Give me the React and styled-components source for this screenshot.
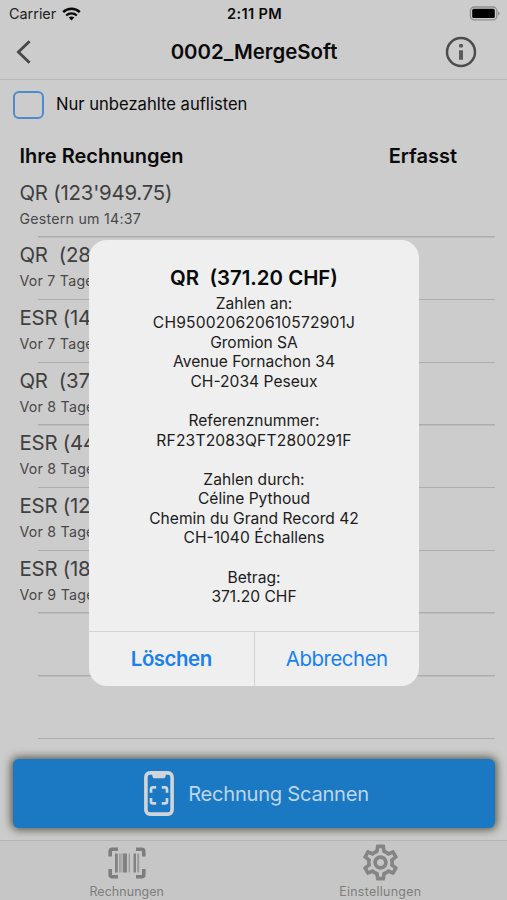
import React from "react";
import styled, { createGlobalStyle } from "styled-components";
import { MdOutlineSettings } from "react-icons/md";

const bills = [
  { title: "QR (123'949.75)", date: "Gestern um 14:37" },
  { title: "QR  (28", date: "Vor 7 Tage" },
  { title: "ESR (14", date: "Vor 7 Tage" },
  { title: "QR  (37", date: "Vor 8 Tage" },
  { title: "ESR (44", date: "Vor 8 Tage" },
  { title: "ESR (12", date: "Vor 8 Tage" },
  { title: "ESR (18", date: "Vor 9 Tage" },
  {},
  {},
];

const message = [
  { text: "Zahlen an:" },
  { text: "CH950020620610572901J", code: true },
  { text: "Gromion SA" },
  { text: "Avenue Fornachon 34" },
  { text: "CH-2034 Peseux" },
  { text: "" },
  { text: "Referenznummer:" },
  { text: "RF23T2083QFT2800291F", code: true },
  { text: "" },
  { text: "Zahlen durch:" },
  { text: "Céline Pythoud" },
  { text: "Chemin du Grand Record 42" },
  { text: "CH-1040 Échallens" },
  { text: "" },
  { text: "Betrag:" },
  { text: "371.20 CHF" },
];

function WifiIcon() {
  return (
    <svg width="19" height="14" viewBox="0 0 19 14" fill="none" stroke="#0a0a0a">
      <path d="M1.2 5.2C5.9 .7 13.1 .7 17.8 5.2" strokeWidth="2.5" />
      <path d="M4.2 8.5C7.2 5.7 11.8 5.7 14.8 8.5" strokeWidth="2.3" />
      <path d="M9.5 13.4L6.7 10.6Q9.5 8.4 12.3 10.6Z" fill="#0a0a0a" stroke="none" />
    </svg>
  );
}

function BatteryIcon() {
  return (
    <svg width="31" height="15" viewBox="0 0 31 15">
      <rect x="1.4" y="1" width="26.4" height="12.8" rx="3.8" fill="none" stroke="#8e8e8e" strokeWidth="1.3" />
      <rect x="3.2" y="2.8" width="22.6" height="9.2" rx="1.6" fill="#000" />
      <path d="M29 5.2Q30.6 6 30.6 7.4T29 9.6Z" fill="#8e8e8e" />
    </svg>
  );
}

function BackIcon() {
  return (
    <svg width="16" height="26" viewBox="0 0 16 26">
      <path d="M13.6 2.2L2.4 13L13.6 23.8" fill="none" stroke="#484848" strokeWidth="2.8" />
    </svg>
  );
}

function InfoIcon() {
  return (
    <svg width="32" height="32" viewBox="0 0 32 32">
      <circle cx="16" cy="16" r="14" fill="none" stroke="#4c4c4c" strokeWidth="2.5" />
      <rect x="14" y="8" width="4" height="3.4" rx="1" fill="#5c5c5c" />
      <rect x="14" y="14.2" width="4" height="9.6" rx=".6" fill="#5c5c5c" />
    </svg>
  );
}

function PhoneScanIcon() {
  return (
    <svg width="30" height="45" viewBox="0 0 30 45" fill="none" stroke="#cfd5da">
      <rect x="1.9" y="1.9" width="26.2" height="41.2" rx="4" strokeWidth="3.6" />
      <path d="M7.5 2H22.5L21.2 6.2Q20.9 7.3 19.8 7.3H10.2Q9.1 7.3 8.8 6.2Z" fill="#cfd5da" stroke="none" />
      <path
        d="M7 21.8V18.5Q7 16.4 9.1 16.4H12.2M17.8 16.4H20.9Q23 16.4 23 18.5V21.8M23 27V30.5Q23 32.4 20.9 32.4H17.8M12.2 32.4H9.1Q7 32.4 7 30.5V27"
        strokeWidth="2.7"
      />
    </svg>
  );
}

function BarcodeIcon() {
  return (
    <svg width="38" height="32" viewBox="0 0 38 32">
      <path
        d="M2.2 9.5V4.2Q2.2 2.2 4.2 2.2H10M28 2.2H33.8Q35.8 2.2 35.8 4.2V9.5M35.8 22V27.8Q35.8 29.8 33.8 29.8H28M10 29.8H4.2Q2.2 29.8 2.2 27.8V22"
        fill="none"
        stroke="#7e7e7e"
        strokeWidth="3.6"
      />
      <path d="M7 6.5H9.8V25.5H7ZM15 6.5H19V25.5H15ZM25.5 6.5H28V25.5H25.5Z" fill="#828282" />
      <path d="M11.2 6.5H12.7V25.5H11.2ZM13.4 6.5H14.4V25.5H13.4ZM20.7 6.5H22V25.5H20.7ZM29.2 6.5H31.2V25.5H29.2Z" fill="#999" />
    </svg>
  );
}

function App() {
  return (
    <Screen>
      <GlobalStyle />
      <StatusBar>
        <Carrier>
          Carrier <WifiIcon />
        </Carrier>
        <Clock>2:11 PM</Clock>
        <BatteryIcon />
      </StatusBar>

      <NavBar>
        <BackIcon />
        <NavTitle>0002_MergeSoft</NavTitle>
        <InfoIcon />
      </NavBar>

      <Filter>
        <Checkbox />
        <FilterLabel>Nur unbezahlte auflisten</FilterLabel>
      </Filter>

      <ListHeader>
        <span>Ihre Rechnungen</span>
        <span>Erfasst</span>
      </ListHeader>

      <List>
        {bills.map((bill, i) => (
          <Row key={i}>
            <RowTitle>{bill.title}</RowTitle>
            <RowDate>{bill.date}</RowDate>
          </Row>
        ))}
      </List>

      <ScanButton>
        <PhoneScanIcon />
        <span>Rechnung Scannen</span>
      </ScanButton>

      <TabBar>
        <Tab>
          <BarcodeIcon />
          <TabLabel $spacing="0.1px">Rechnungen</TabLabel>
        </Tab>
        <Tab>
          <MdOutlineSettings size={43} color="#858585" />
          <TabLabel $spacing="0.3px">Einstellungen</TabLabel>
        </Tab>
      </TabBar>

      <Overlay>
        <Dialog>
          <DialogTitle>{"QR  (371.20 CHF)"}</DialogTitle>
          <DialogMessage>
            {message.map((line, i) => (
              <MessageLine key={i} $code={line.code}>
                {line.text}
              </MessageLine>
            ))}
          </DialogMessage>
          <DialogActions>
            <DialogButton $bold>Löschen</DialogButton>
            <DialogButton>Abbrechen</DialogButton>
          </DialogActions>
        </Dialog>
      </Overlay>
    </Screen>
  );
}

export default App;

const GlobalStyle = createGlobalStyle`
  * {
    box-sizing: border-box;
  }
  body {
    margin: 0;
    background-color: #cccccc;
    font-family: Inter, "Liberation Sans", sans-serif;
  }
  svg {
    display: block;
    flex-shrink: 0;
  }
  button {
    font-family: inherit;
    border: none;
    padding: 0;
    background: none;
  }
`;

const Screen = styled.div`
  position: relative;
  display: flex;
  flex-direction: column;
  width: 507px;
  height: 900px;
  overflow: hidden;
  background-color: #cccccc;
  color: #0a0a0a;
`;

const StatusBar = styled.div`
  display: grid;
  grid-template-columns: 1fr auto 1fr;
  align-items: center;
  height: 27px;
  padding: 0 7px 0 9px;
  > svg {
    justify-self: end;
  }
`;

const Carrier = styled.div`
  display: flex;
  align-items: center;
  gap: 6px;
  font-size: 14.4px;
  color: #222;
`;

const Clock = styled.div`
  font-size: 14.6px;
  font-weight: 600;
  letter-spacing: 0.35px;
`;

const NavBar = styled.header`
  display: flex;
  align-items: center;
  justify-content: space-between;
  height: 53px;
  padding: 0 30px 3px 16px;
  border-bottom: 1.5px solid #b9b9b9;
`;

const NavTitle = styled.h1`
  margin: 0 0 0 31px;
  font-size: 20.4px;
  font-weight: 600;
`;

const Filter = styled.div`
  display: flex;
  align-items: center;
  gap: 12px;
  height: 50px;
  padding-left: 13px;
`;

const Checkbox = styled.div`
  width: 31px;
  height: 28px;
  border: 2px solid #4c8bce;
  border-radius: 6px;
`;

const FilterLabel = styled.span`
  padding-bottom: 2px;
  font-size: 16.6px;
`;

const ListHeader = styled.div`
  display: flex;
  justify-content: space-between;
  align-items: center;
  height: 45px;
  padding: 7px 50px 0 19.5px;
  font-size: 20px;
  font-weight: 600;
`;

const List = styled.div`
  flex: 1;
  min-height: 0;
`;

const Row = styled.div`
  height: 62.7px;
  padding: 3.5px 0 0 19.5px;
  background: linear-gradient(#adadad, #adadad) no-repeat 38px 100% / 457px 1.5px;
  white-space: pre;
`;

const RowTitle = styled.div`
  height: 27px;
  line-height: 27px;
  font-size: 20.4px;
  letter-spacing: -0.22px;
  color: #404040;
`;

const RowDate = styled.div`
  height: 26px;
  line-height: 26px;
  font-size: 14.2px;
  letter-spacing: 0.24px;
  color: #484848;
`;

const ScanButton = styled.button`
  display: flex;
  flex-shrink: 0;
  align-items: center;
  justify-content: center;
  gap: 14px;
  height: 69px;
  margin: 0 12px 12px 13px;
  padding-left: 5px;
  border-radius: 6px;
  background-color: #1b78c3;
  box-shadow: 0 0 9px 2px rgba(50, 50, 35, 0.75);
  color: #bcd6ea;
  font-size: 20.2px;
  letter-spacing: -0.3px;
`;

const TabBar = styled.nav`
  display: flex;
  flex-shrink: 0;
  height: 60px;
  border-top: 1.5px solid #b4b4b4;
  background-color: #c6c6c6;
`;

const Tab = styled.div`
  display: grid;
  flex: 1;
  grid-template-rows: 43px 15px;
  justify-items: center;
  align-items: center;
`;

const TabLabel = styled.span`
  font-size: 12.4px;
  line-height: 15px;
  letter-spacing: ${(props) => props.$spacing};
  color: #7d7d7d;
`;

const Overlay = styled.div`
  position: absolute;
  inset: 0;
  padding: 240px 88px 0 89px;
`;

const Dialog = styled.div`
  height: 445.5px;
  border-radius: 18px;
  background-color: #efefef;
  overflow: hidden;
  text-align: center;
`;

const DialogTitle = styled.h2`
  margin: 0;
  padding-top: 24px;
  line-height: 28px;
  font-size: 20.4px;
  font-weight: 600;
  white-space: pre;
`;

const DialogMessage = styled.div`
  height: 339px;
  padding-top: 1.7px;
  font-size: 15.6px;
  color: #1c1c1c;
`;

const MessageLine = styled.div`
  height: 19.57px;
  line-height: 19.57px;
  letter-spacing: ${(props) => (props.$code ? "0.18px" : "0")};
`;

const DialogActions = styled.div`
  display: flex;
  height: 54.5px;
  border-top: 1.5px solid #d4d4d4;
`;

const DialogButton = styled.button`
  flex: 1;
  font-size: 20.4px;
  font-weight: ${(props) => (props.$bold ? 600 : 400)};
  letter-spacing: -0.45px;
  color: #1a7ff0;
  & + & {
    border-left: 1.5px solid #d4d4d4;
  }
`;
